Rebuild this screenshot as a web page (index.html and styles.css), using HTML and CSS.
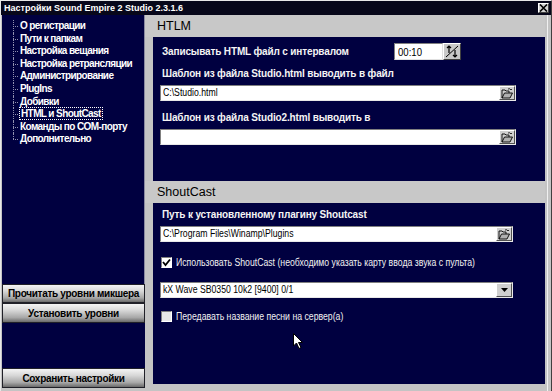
FILE: index.html
```html
<!DOCTYPE html>
<html lang="ru">

<head>
    <meta charset="UTF-8">
    <meta name="viewport" content="width=device-width, initial-scale=1.0">
    <title>Настройки Sound Empire 2 Studio</title>
    <link rel="stylesheet" href="styles.css">
</head>

<body>
    <div class="window">
        <div class="titlebar">
            <span class="title">Настройки Sound Empire 2 Studio 2.3.1.6</span>
            <span class="close">
                <svg width="9" height="8" viewBox="0 0 9 8">
                    <path d="M1 0.5 L8 7.5 M8 0.5 L1 7.5" stroke="#000" stroke-width="1.6" />
                </svg>
            </span>
        </div>

        <div class="frame">
            <aside class="sidebar">
                <ul class="tree">
                    <li>О регистрации</li>
                    <li>Пути к папкам</li>
                    <li>Настройка вещания</li>
                    <li>Настройка ретрансляции</li>
                    <li>Администрирование</li>
                    <li>PlugIns</li>
                    <li>Добивки</li>
                    <li><span class="focused">HTML и ShoutCast</span></li>
                    <li>Команды по COM-порту</li>
                    <li class="last">Дополнительно</li>
                </ul>
                <button class="btn btn-read">Прочитать уровни микшера</button>
                <button class="btn btn-set">Установить уровни</button>
                <div class="sidebar-fill"></div>
                <button class="btn btn-save">Сохранить настройки</button>
            </aside>

            <main class="content">
                <div class="section-title">HTLM</div>
                <div class="panel panel-html">
                    <div class="row-interval">
                        <span class="label">Записывать HTML файл с интервалом</span>
                        <div class="time-box">
                            <span class="narrow time-value">00:10</span>
                        </div>
                        <span class="spin">
                            <svg width="14" height="13" viewBox="0 0 14 13">
                                <path d="M1 12 L13 1" stroke="#000" stroke-width="1" />
                                <path d="M4 1 L4 8 M2 3 L4 1 L6 3" stroke="#000" stroke-width="1.2" fill="none" />
                                <path d="M10 5 L10 12 M8 10 L10 12 L12 10" stroke="#000" stroke-width="1.2" fill="none" />
                            </svg>
                        </span>
                    </div>

                    <div class="label label-line">Шаблон из файла Studio.html выводить в файл</div>
                    <div class="field">
                        <span class="field-text"><span class="narrow">C:\Studio.html</span></span>
                        <span class="browse">
                            <svg width="12" height="11" viewBox="0 0 12 11">
                                <path d="M1 3 L1 10 L9 10 L11.5 5 L3.5 5 L1 10" stroke="#000" fill="#b0b0b0" stroke-width="0.9" />
                                <path d="M1 3 L1 2 L4 2 L5 3 L8 3 L8 5" stroke="#000" fill="none" stroke-width="0.9" />
                                <path d="M7 1 Q9 0 10 2 L11 1" stroke="#000" fill="none" stroke-width="0.8" />
                            </svg>
                        </span>
                    </div>

                    <div class="label label-line">Шаблон из файла Studio2.html выводить в</div>
                    <div class="field">
                        <span class="field-text"></span>
                        <span class="browse">
                            <svg width="12" height="11" viewBox="0 0 12 11">
                                <path d="M1 3 L1 10 L9 10 L11.5 5 L3.5 5 L1 10" stroke="#000" fill="#b0b0b0" stroke-width="0.9" />
                                <path d="M1 3 L1 2 L4 2 L5 3 L8 3 L8 5" stroke="#000" fill="none" stroke-width="0.9" />
                                <path d="M7 1 Q9 0 10 2 L11 1" stroke="#000" fill="none" stroke-width="0.8" />
                            </svg>
                        </span>
                    </div>
                </div>

                <div class="section-title">ShoutCast</div>
                <div class="panel panel-shout">
                    <div class="label label-line">Путь к установленному плагину Shoutcast</div>
                    <div class="field field-short">
                        <span class="field-text"><span class="narrow">C:\Program Files\Winamp\Plugins</span></span>
                        <span class="browse">
                            <svg width="12" height="11" viewBox="0 0 12 11">
                                <path d="M1 3 L1 10 L9 10 L11.5 5 L3.5 5 L1 10" stroke="#000" fill="#b0b0b0" stroke-width="0.9" />
                                <path d="M1 3 L1 2 L4 2 L5 3 L8 3 L8 5" stroke="#000" fill="none" stroke-width="0.9" />
                                <path d="M7 1 Q9 0 10 2 L11 1" stroke="#000" fill="none" stroke-width="0.8" />
                            </svg>
                        </span>
                    </div>

                    <label class="check check-first">
                        <span class="box checked">
                            <svg width="9" height="9" viewBox="0 0 9 9">
                                <path d="M1 4 L3.5 7 L8 1.5" stroke="#000" stroke-width="1.8" fill="none" />
                            </svg>
                        </span>
                        <span class="narrow check-text">Использовать ShoutCast (необходимо указать карту ввода звука с пульта)</span>
                    </label>

                    <div class="field field-short combo">
                        <span class="field-text"><span class="narrow">kX Wave SB0350 10k2 [9400] 0/1</span></span>
                        <span class="browse arrow">
                            <svg width="7" height="4" viewBox="0 0 7 4">
                                <path d="M0 0 L7 0 L3.5 4 Z" fill="#000" />
                            </svg>
                        </span>
                    </div>

                    <label class="check check-second">
                        <span class="box"></span>
                        <span class="narrow check-text">Передавать название песни на сервер(а)</span>
                    </label>

                    <svg class="cursor" width="11" height="17" viewBox="0 0 11 17">
                        <path d="M0.5 0.5 L0.5 13 L3.5 10 L6 15.5 L8 14.5 L5.5 9.5 L9.5 9.5 Z" fill="#fff" stroke="#000" stroke-width="1" />
                    </svg>
                </div>
            </main>
        </div>
    </div>
</body>

</html>
```

FILE: styles.css
```css
body {
    margin: 0;
    background-color: #c0c0c0;
    font-family: "Liberation Sans", Arial, sans-serif;
}

.window {
    width: 552px;
    height: 391px;
    box-sizing: border-box;
    background-color: #c4c4c4;
    border-top: 1px solid #e8e8e8;
    border-left: 1px solid #e8e8e8;
    border-right: 1px solid #404040;
    box-shadow: inset -3px 0 0 #c4c4c4, inset -4px 0 0 #f0f0f0;
    display: flex;
    flex-direction: column;
    overflow: hidden;
}

.titlebar {
    height: 14px;
    background-color: #07071a;
    display: flex;
    align-items: center;
    justify-content: space-between;
    padding: 0 2px 0 3px;
}

.title {
    color: #fff;
    font-weight: bold;
    font-size: 9px;
}

.close {
    width: 11px;
    height: 10px;
    background-color: #d4d4d4;
    border: 1px solid;
    border-color: #fff #404040 #404040 #fff;
    box-sizing: border-box;
    display: flex;
    align-items: center;
    justify-content: center;
}

.frame {
    flex: 1;
    display: flex;
    padding-left: 1px;
}

/* shrink text to look like a narrow windows font */
.narrow {
    display: inline-block;
    transform: scaleX(0.87);
    transform-origin: left center;
}

/* left column */

.sidebar {
    width: 143px;
    display: flex;
    flex-direction: column;
    padding-bottom: 3px;
}

.tree {
    height: 269px;
    margin: 0;
    padding: 5px 0 0 11px;
    list-style: none;
    background-color: #000040;
    box-sizing: border-box;
    border-right: 1px solid #8a8aa0;
}

.tree li {
    position: relative;
    padding-left: 6px;
    line-height: 12.6px;
    color: #fff;
    font-weight: bold;
    font-size: 10px;
    letter-spacing: -0.6px;
    white-space: nowrap;
    border-left: 1px dotted #9090b0;
}

.tree li.last {
    border-left-color: transparent;
}

.tree li::before {
    content: "";
    position: absolute;
    left: -1px;
    top: 6px;
    width: 5px;
    border-top: 1px dotted #9090b0;
}

.tree li.last::after {
    content: "";
    position: absolute;
    left: -1px;
    top: 0;
    height: 6px;
    border-left: 1px dotted #9090b0;
}

.focused {
    outline: 1px dotted #fff;
    padding: 0 1px;
}

.btn {
    display: block;
    width: 100%;
    margin: 0;
    padding: 0;
    border: 1px solid #202028;
    background: linear-gradient(#f4f4f4, #d8d8d8 35%, #a8a8a8 75%, #6a6a6a);
    color: #000;
    font-family: "Liberation Sans", Arial, sans-serif;
    font-weight: bold;
    font-size: 10px;
    letter-spacing: -0.3px;
    text-align: center;
    cursor: pointer;
}

.btn-read {
    height: 19px;
}

.btn-set,
.btn-save {
    height: 20px;
}

.sidebar-fill {
    flex: 1;
    background-color: #000040;
}

/* right column */

.content {
    width: 392px;
    margin-left: 8px;
    display: flex;
    flex-direction: column;
}

.section-title {
    height: 22px;
    margin-left: -8px;
    padding-left: 12px;
    display: flex;
    align-items: center;
    font-size: 12.5px;
    color: #000;
    background-color: #c8c8c8;
}

.panel {
    background-color: #000040;
    padding: 6px 0 0 7px;
    box-sizing: border-box;
    display: flex;
    flex-direction: column;
    align-items: flex-start;
}

.panel-html {
    height: 144px;
}

.panel-shout {
    position: relative;
    height: 181px;
}

.label {
    color: #f4f4f4;
    font-weight: bold;
    font-size: 10px;
    letter-spacing: -0.15px;
}

.label-line {
    padding-left: 2px;
    line-height: 12px;
}

.row-interval {
    display: flex;
    align-items: center;
    height: 17px;
    margin-bottom: 8px;
}

.row-interval .label {
    width: 232px;
    padding-left: 2px;
}

.time-box {
    width: 49px;
    height: 17px;
    box-sizing: border-box;
    background-color: #fff;
    border: 1px solid;
    border-color: #808080 #e0e0e0 #e0e0e0 #808080;
    display: flex;
    align-items: center;
    padding-left: 3px;
}

.time-value {
    font-size: 11px;
    color: #000;
}

.spin {
    width: 18px;
    height: 17px;
    box-sizing: border-box;
    background-color: #c8c8c8;
    border: 1px solid;
    border-color: #fff #404040 #404040 #fff;
    display: flex;
    align-items: center;
    justify-content: center;
}

.field {
    width: 356px;
    height: 16px;
    box-sizing: border-box;
    display: flex;
    align-items: stretch;
    background-color: #fff;
    border: 1px solid;
    border-color: #808080 #e8e8e8 #e8e8e8 #808080;
    margin-top: 5px;
    margin-bottom: 11px;
}

.field-short {
    width: 353px;
    margin-bottom: 0;
}

.field-text {
    flex: 1;
    padding-left: 2px;
    font-size: 10px;
    line-height: 14px;
    color: #000;
    white-space: nowrap;
    overflow: hidden;
}

.browse {
    width: 16px;
    box-sizing: border-box;
    background-color: #d0d0d0;
    border: 1px solid;
    border-color: #fff #505050 #505050 #fff;
    display: flex;
    align-items: center;
    justify-content: center;
}

.combo {
    margin-top: 14px;
}

.check {
    display: flex;
    align-items: center;
    height: 12px;
    margin-left: 1px;
}

.check-first {
    margin-top: 14px;
}

.check-second {
    margin-top: 12px;
}

.box {
    width: 11px;
    height: 11px;
    box-sizing: border-box;
    background-color: #e8e8e8;
    border: 1px solid;
    border-color: #808080 #fff #fff #808080;
    display: flex;
    align-items: center;
    justify-content: center;
    margin-right: 4px;
}

.box.checked {
    background-color: #fff;
}

.check-text {
    color: #f0f0f0;
    font-size: 10px;
    white-space: nowrap;
}

.cursor {
    position: absolute;
    left: 140px;
    top: 130px;
}
```
